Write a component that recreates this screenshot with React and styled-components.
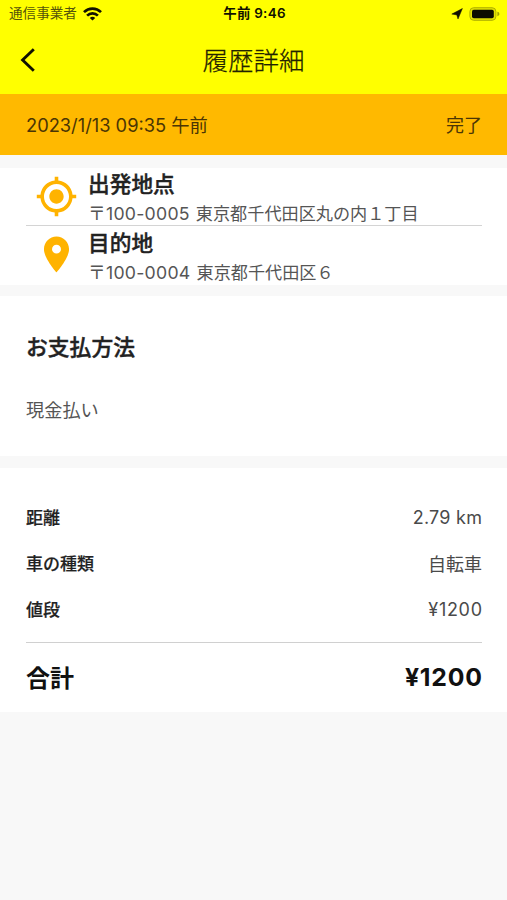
import React from "react";
import styled, { createGlobalStyle } from "styled-components";
import { MdMyLocation, MdLocationOn } from "react-icons/md";

const GlobalStyle = createGlobalStyle`
  * {
    box-sizing: border-box;
  }

  body {
    margin: 0;
    background: #f8f8f8;
    color: #222;
    font-family: Inter, "Noto Sans CJK JP", sans-serif;
  }

  h1, h2, p {
    margin: 0;
  }
`;

const Screen = styled.div`
  width: 100%;
  min-height: 900px;
  background: #f8f8f8;
`;

const Header = styled.header`
  height: 94px;
  background: #ffff00;
`;

const StatusBar = styled.div`
  display: grid;
  grid-template-columns: 1fr auto 1fr;
  grid-template-rows: 27px;
  align-items: center;
  height: 27px;
  padding: 0 7px 0 9px;
`;

const Carrier = styled.div`
  display: flex;
  align-items: center;
  gap: 6px;
  height: 27px;
  font-size: 13.6px;
  line-height: 27px;
  color: #54540a;
`;

const Clock = styled.div`
  height: 27px;
  font-size: 13.4px;
  font-weight: 600;
  line-height: 27px;
  color: #111100;
  letter-spacing: 0.3px;
`;

const StatusIcons = styled.div`
  display: flex;
  align-items: center;
  justify-content: flex-end;
  gap: 6px;
`;

const NavBar = styled.div`
  display: grid;
  grid-template-columns: 60px 1fr 60px;
  align-items: center;
  height: 67px;
`;

const BackButton = styled.button`
  display: flex;
  align-items: center;
  height: 40px;
  padding: 0 0 2px 20px;
  border: 0;
  background: none;
`;

const Title = styled.h1`
  padding-top: 1px;
  font-size: 25.5px;
  font-weight: 300;
  line-height: 66px;
  text-align: center;
  color: #222200;
  -webkit-text-stroke: 0.25px #222200;
`;

const StatusBand = styled.div`
  display: flex;
  justify-content: space-between;
  height: 61px;
  padding: 0 25px 0 26px;
  background: #ffb900;
  font-size: 18px;
  line-height: 64px;
  color: #4a3505;
`;

const DateText = styled.span`
  font-size: 18.3px;
  line-height: 62px;
`;

const Section = styled.section`
  height: ${(props) => props.$height}px;
  margin-top: ${(props) => props.$gap}px;
  padding: ${(props) => props.$top || 0}px 25px 0 26px;
  background: #fff;
`;

const Place = styled.div`
  display: flex;
  height: ${(props) => props.$height}px;
  border-bottom: ${(props) => (props.$divider ? "1px solid #d4d4d4" : "0")};
`;

const PlaceIcon = styled.div`
  display: flex;
  justify-content: center;
  width: 61px;
  padding-top: 7px;
  margin-right: 1px;
  color: #ffb300;
`;

const PlaceName = styled.h2`
  padding-top: ${(props) => props.$offset}px;
  font-size: 21.7px;
  font-weight: 500;
  line-height: 28px;
  -webkit-text-stroke: 0.4px #222;
`;

const Address = styled.p`
  font-size: 17.15px;
  line-height: 31px;
  color: #555;
  white-space: nowrap;
`;

const PostalCode = styled.span`
  margin-right: 6px;
  font-size: 17.7px;
  line-height: 1;
  letter-spacing: 0.25px;
`;

const SectionTitle = styled.h2`
  font-size: 21.8px;
  font-weight: 500;
  line-height: 34px;
  -webkit-text-stroke: 0.4px #222;
`;

const PaymentMethod = styled.p`
  margin-top: 31px;
  font-size: 18.2px;
  line-height: 30px;
  color: #555;
`;

const DetailRow = styled.div`
  display: flex;
  justify-content: space-between;
  height: 46px;
  line-height: 47px;
`;

const Label = styled.span`
  font-size: 17px;
  font-weight: 500;
  color: #222;
  -webkit-text-stroke: 0.2px #222;
`;

const Value = styled.span`
  margin-right: -${(props) => props.$spacing}px;
  font-size: 18px;
  line-height: ${(props) => (props.$spacing ? 45 : 47)}px;
  letter-spacing: ${(props) => props.$spacing}px;
  color: #4a4a4a;
`;

const TotalRow = styled.div`
  display: flex;
  justify-content: space-between;
  height: 70px;
  margin-top: 9px;
  border-top: 1px solid #d0d0d0;
  font-size: 24px;
  font-weight: 700;
  line-height: 71px;
  color: #111;
`;

const TotalPrice = styled.span`
  margin-right: -0.8px;
  font-size: 24.8px;
  line-height: 69px;
  letter-spacing: 0.8px;
`;

const WifiIcon = () => (
  <svg width="19" height="14" viewBox="0 0 19 14" fill="none" stroke="#111100" strokeWidth="2.7">
    <path d="M1 5.1 C5.8 0.4 13.2 0.4 18 5.1" />
    <path d="M4.1 8.6 C7.2 5.6 11.8 5.6 14.9 8.6" />
    <path d="M9.5 13.4 L6.8 10.9 C8.3 9.5 10.7 9.5 12.2 10.9 Z" fill="#111100" stroke="none" />
  </svg>
);

const ArrowIcon = () => (
  <svg width="12" height="12" viewBox="0 0 12 12" fill="#111100">
    <path d="M11.4 0.5 L7 11 L5.8 6.9 L0.8 6.1 Z" stroke="#111100" strokeWidth="0.5" />
  </svg>
);

const BatteryIcon = () => (
  <svg width="31" height="14" viewBox="0 0 31 14">
    <rect x="0.9" y="0.7" width="26" height="12.6" rx="3.8" fill="#e0e000" stroke="#b0b000" />
    <rect x="3" y="2.7" width="21.8" height="8.6" rx="1.8" fill="#0b0b00" />
    <path d="M28.4 4.8 C31 5.4 31 8.6 28.4 9.2 Z" fill="#a0a000" />
  </svg>
);

const BackIcon = () => (
  <svg width="16" height="24" viewBox="0 0 16 24" fill="none" stroke="#111100" strokeWidth="2.9">
    <path d="M13.8 1.2 L2.6 12 L13.8 22.8" />
  </svg>
);

const details = [
  { label: "距離", value: "2.79 km", spacing: 0.25 },
  { label: "車の種類", value: "自転車", spacing: 0 },
  { label: "値段", value: "¥1200", spacing: 0.7 },
];

const App = () => {
  return (
    <Screen>
      <GlobalStyle />
      <Header>
        <StatusBar>
          <Carrier>
            通信事業者
            <WifiIcon />
          </Carrier>
          <Clock>午前 9:46</Clock>
          <StatusIcons>
            <ArrowIcon />
            <BatteryIcon />
          </StatusIcons>
        </StatusBar>
        <NavBar>
          <BackButton aria-label="戻る">
            <BackIcon />
          </BackButton>
          <Title>履歴詳細</Title>
        </NavBar>
      </Header>

      <StatusBand>
        <DateText>2023/1/13 09:35 午前</DateText>
        <span>完了</span>
      </StatusBand>

      {/* Départ et destination */}
      <Section $gap={13} $height={117}>
        <Place $height={58} $divider>
          <PlaceIcon>
            <MdMyLocation size={43} />
          </PlaceIcon>
          <div>
            <PlaceName $offset={2}>出発地点</PlaceName>
            <Address>
              <PostalCode>〒100-0005</PostalCode>
              東京都千代田区丸の内１丁目
            </Address>
          </div>
        </Place>
        <Place $height={59}>
          <PlaceIcon>
            <MdLocationOn size={43} />
          </PlaceIcon>
          <div>
            <PlaceName $offset={3}>目的地</PlaceName>
            <Address>
              <PostalCode>〒100-0004</PostalCode>
              東京都千代田区６
            </Address>
          </div>
        </Place>
      </Section>

      <Section $gap={11} $height={160} $top={34}>
        <SectionTitle>お支払方法</SectionTitle>
        <PaymentMethod>現金払い</PaymentMethod>
      </Section>

      <Section $gap={12} $height={244} $top={27}>
        {details.map((item) => (
          <DetailRow key={item.label}>
            <Label>{item.label}</Label>
            <Value $spacing={item.spacing}>{item.value}</Value>
          </DetailRow>
        ))}
        <TotalRow>
          <span>合計</span>
          <TotalPrice>¥1200</TotalPrice>
        </TotalRow>
      </Section>
    </Screen>
  );
};

export default App;
